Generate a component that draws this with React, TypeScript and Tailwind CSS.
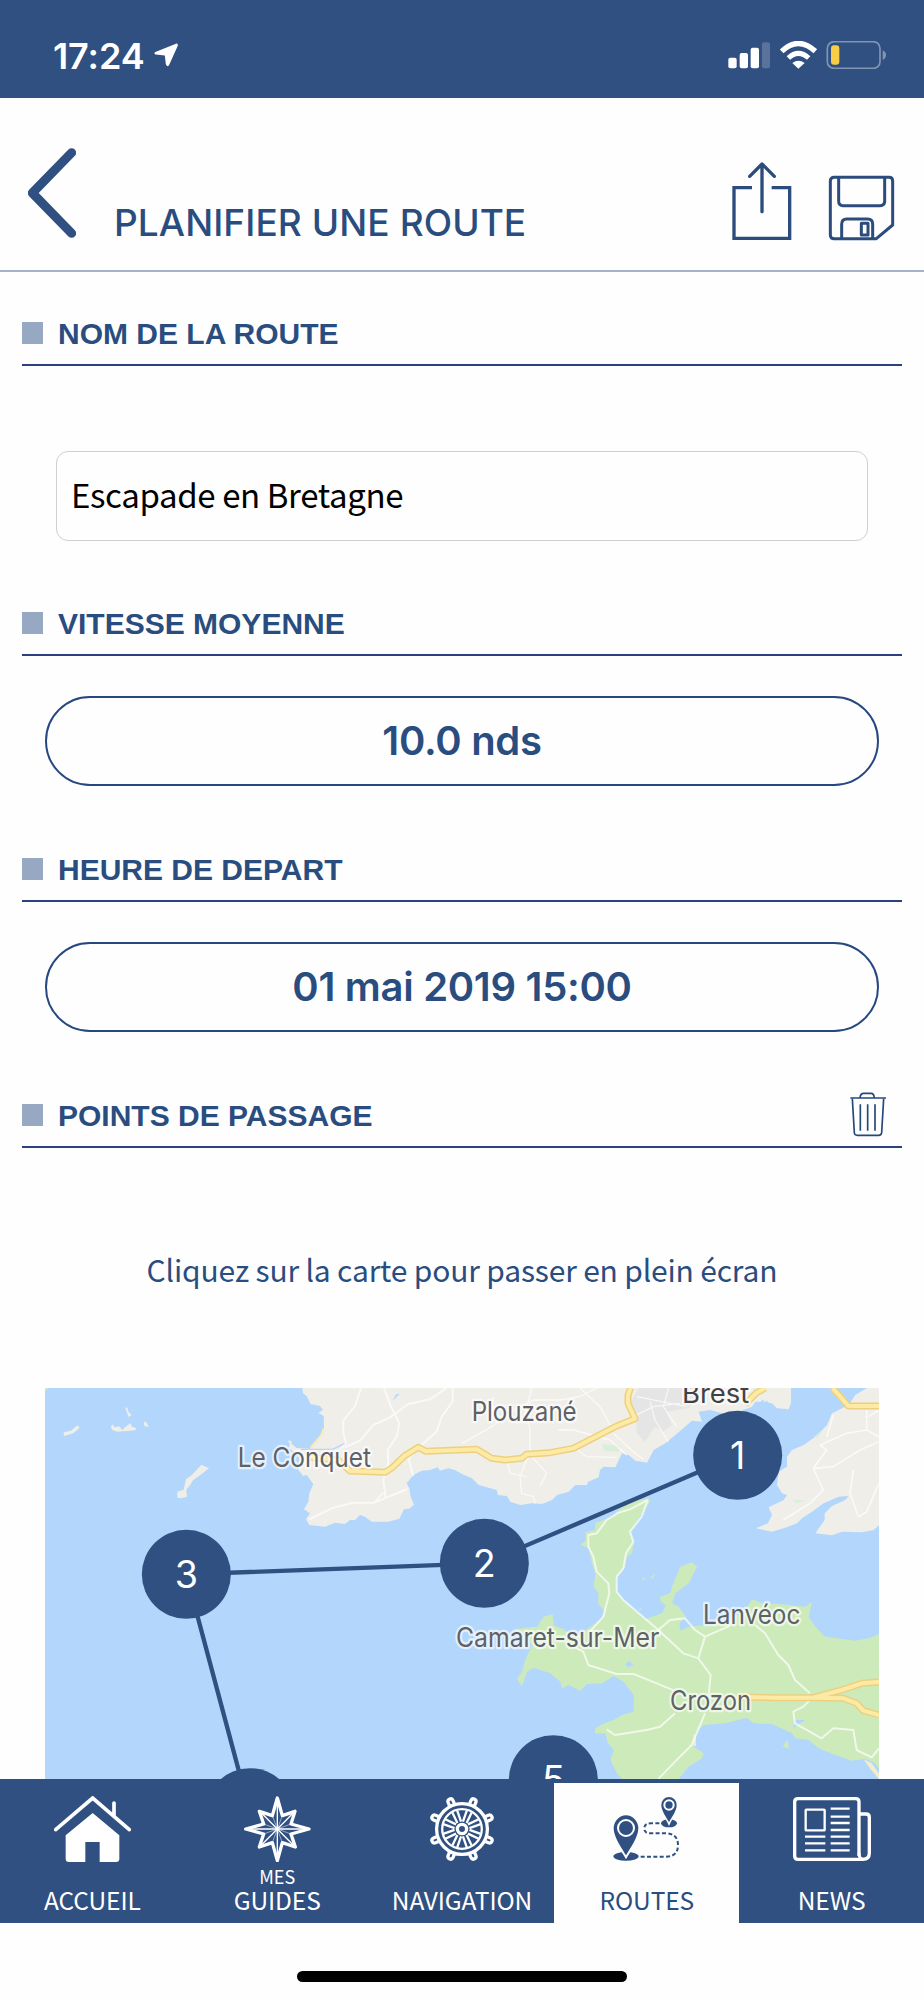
import type { ReactNode } from "react";

const NAVY = "#2f5080";

// --- Icons ---

function StatusIcons() {
  return (
    <svg className="h-7 w-[159px]" viewBox="798 124 477 84" fill="none">
      <rect x="799" y="174" width="25" height="32" rx="6" fill="#fff" />
      <rect x="833" y="160" width="25" height="46" rx="6" fill="#fff" />
      <rect x="866" y="144" width="25" height="62" rx="6" fill="#fff" />
      <rect x="900" y="128" width="24" height="78" rx="6" fill="#59739b" />
      <path d="M959 155 Q1009 108 1060 155" stroke="#fff" strokeWidth="16" />
      <path d="M979 175 Q1009 147 1040 175" stroke="#fff" strokeWidth="15" />
      <path d="M991 190 Q1009 176 1028 190 L1009 207Z" fill="#fff" />
      <rect x="1096" y="126" width="158" height="80" rx="20" stroke="#8295b2" strokeWidth="5" />
      <path d="M1262 152 Q1272 157 1272 166 Q1272 176 1262 181Z" fill="#8295b2" />
      <rect x="1107" y="137" width="25" height="58" rx="9" fill="#f8ce46" />
    </svg>
  );
}

function ShareIcon() {
  return (
    <svg className="h-[79px] w-[60px]" viewBox="809 485 180 237" fill="none" stroke="#2b4c7c" strokeWidth="10">
      <path d="M869 562H815V714H982V562H928" />
      <path d="M899 634V492M862 528L899 491L936 528" strokeLinecap="round" strokeLinejoin="round" />
    </svg>
  );
}

function SaveIcon() {
  return (
    <svg className="h-[66px] w-[67px]" viewBox="1097 524 201 198" fill="none" stroke="#2b4c7c" strokeWidth="9" strokeLinejoin="round">
      <path d="M1116 531H1280Q1291 531 1291 542V674L1242 715H1116Q1104 715 1104 703V543Q1104 531 1116 531Z" />
      <path d="M1129 531V603Q1129 616 1142 616H1253Q1267 616 1267 603V531" />
      <path d="M1138 715V672Q1138 656 1153 656H1216Q1231 656 1231 671V715M1197 669H1217V704H1197Z" />
    </svg>
  );
}

function TrashIcon() {
  return (
    <svg className="h-[45px] w-9" viewBox="1164 96 108 135" fill="none" stroke="#24477c" strokeWidth="5">
      <path d="M1165 114H1272" />
      <path d="M1194 114Q1195 100 1205 100H1227Q1236 100 1237 114" />
      <path d="M1171 116L1177 219Q1178 226 1186 226H1250Q1258 226 1259 218L1265 116" />
      <path d="M1195 133V212M1217 133V212M1239 133V212" />
    </svg>
  );
}

function HomeIcon() {
  return (
    <svg className="h-[66px] w-[77px]" viewBox="161 80 231 198" fill="none">
      <path d="M166 181L277 86L387 181M341 138V101" stroke="#fff" strokeWidth="11" strokeLinecap="round" />
      <path d="M277 131L357 198V268Q357 278 347 278H298V218H255V278H206Q196 278 196 268V198Z" fill="#fff" />
    </svg>
  );
}

function CompassIcon() {
  return (
    <svg className="h-[66px] w-[67px]" viewBox="732 79 201 198" fill="none" stroke="#fff" strokeLinejoin="round">
      <path
        d="M832 85L847 138L885 125L873 163L927 178L873 193L886 232L847 219L832 273L817 219L778 232L791 193L737 178L791 163L778 125L817 138Z"
        strokeWidth="10"
      />
      <path d="M832 90V270M740 178H925" strokeWidth="4" />
      <path d="M785 131L879 225M879 131L785 225" strokeWidth="4" />
      <path d="M817 138L847 219M847 138L817 219M791 163L873 193M873 163L791 193" strokeWidth="3" opacity=".5" />
    </svg>
  );
}

const HANDLES = [22.5, 67.5, 112.5, 157.5, 202.5, 247.5, 292.5, 337.5];

function WheelIcon() {
  return (
    <svg className="h-[66px] w-[66px]" viewBox="-100 -99 200 198" fill="none" stroke="#fff">
      <circle r="77" strokeWidth="10" />
      <circle r="60" strokeWidth="7" />
      <circle r="14" strokeWidth="10" />
      {HANDLES.map((a) => (
        <g key={a} transform={`rotate(${a})`}>
          <path d="M-6 -22L-8 -58M6 -22L8 -58" strokeWidth="7" />
          <path d="M-8 -80V-90Q-8 -98 0 -98Q8 -98 8 -90V-80" strokeWidth="10" />
        </g>
      ))}
    </svg>
  );
}

function RouteIcon() {
  return (
    <svg className="h-[66px] w-[67px]" viewBox="454 80 201 198" fill={NAVY}>
      <ellipse cx="493" cy="261" rx="38" ry="13" />
      <ellipse cx="622" cy="162" rx="24" ry="12" />
      <path
        d="M493 258C485 244 456 205 456 177A37 39 0 0 1 530 177C530 205 501 244 493 258Z"
        stroke="#fff"
        strokeWidth="12"
        paintOrder="stroke"
      />
      <path
        d="M622 159C616 146 599 126 599 107A23 24 0 0 1 645 107C645 126 628 146 622 159Z"
        stroke="#fff"
        strokeWidth="9"
        paintOrder="stroke"
      />
      <circle cx="493" cy="176" r="24" stroke="#fff" strokeWidth="6" />
      <circle cx="622" cy="107" r="14" stroke="#fff" strokeWidth="6" />
      <path
        d="M537 262H612Q649 262 649 227Q649 192 610 192H565Q548 192 548 177Q548 162 568 162H598"
        fill="none"
        stroke={NAVY}
        strokeWidth="6"
        strokeDasharray="12 7"
      />
    </svg>
  );
}

function NewsIcon() {
  return (
    <svg className="h-[66px] w-[78px]" viewBox="993 80 234 198" fill="none" stroke="#fff">
      <path d="M1191 260V98Q1191 88 1181 88H1008Q998 88 998 98V260Q998 270 1008 270H1203Q1222 270 1222 251V144Q1222 134 1212 134H1191" strokeWidth="10" />
      <path d="M1191 250Q1191 270 1204 270" strokeWidth="9" />
      <rect x="1031" y="121" width="57" height="62" strokeWidth="7" rx="2" />
      <path
        d="M1106 118H1163M1106 142H1163M1106 161H1163M1106 182H1163M1106 202H1163M1106 222H1163M1106 243H1163M1029 202H1090M1029 222H1090M1029 243H1090"
        strokeWidth="7"
      />
    </svg>
  );
}

// --- Map ---

const places = [
  { name: "Le Conquet", x: 713, y: 292, w: 400 },
  { name: "Plouzané", x: 1415, y: 154, w: 315 },
  { name: "Camaret-sur-Mer", x: 1368, y: 832, w: 610 },
  { name: "Lanvéoc", x: 2109, y: 761, w: 292 },
  { name: "Crozon", x: 2010, y: 1021, w: 243 },
];

const waypoints = [
  { n: 1, x: 2213, y: 256 },
  { n: 2, x: 1453, y: 580 },
  { n: 3, x: 559, y: 613 },
  { n: 4, x: 750, y: 1328 },
  { n: 5, x: 1660, y: 1229 },
];

function RouteMap() {
  return (
    <svg className="block h-[391px] w-[834px]" viewBox="135 54 2502 1173">
      <rect x="135" y="54" width="2502" height="1173" fill="#b3d7fc" />
      <path d="M135 54H145L135 64Z" fill="#dce9b8" />

      {/* islands */}
      <g fill="#efeee9">
        <path d="M191 187L213 182L232 166L239 173L220 190L192 198Z" />
        <path d="M332 172L338 163L344 172L358 169L367 181L375 172L391 160L396 170L408 174L406 181L352 185L338 180Z" />
        <path d="M375 112L382 114L386 127L395 135L386 141Z" />
        <path d="M432 155L439 157L446 171L433 168Z" />
        <path d="M604 284L627 295L600 316L579 331L571 344L559 360L561 380L543 385L532 383V365L551 359L558 327L575 316Z" />
      </g>

      {/* mainland */}
      <path
        fill="#efeee9"
        d="M907 54L909 70L920 78L932 102L960 108L969 120L955 128L971 138L972 176L950 212L930 236L890 234L875 222L874 212L862 212L870 222L867 235L900 258L895 300L910 318L920 315L940 342L928 370L925 395L912 418L930 430L918 448L928 465L975 470L1005 458L1035 462L1050 450L1065 450L1080 435L1095 440L1115 455L1165 455L1198 446L1212 418L1228 416L1242 404L1232 380L1228 355L1220 340L1240 315L1265 302L1290 300L1313 292L1320 302L1345 295L1365 300L1386 312L1416 325L1436 345L1471 355L1490 360L1494 375L1521 378L1531 395L1561 405L1596 400L1626 402L1656 390L1671 375L1706 365L1726 345L1761 345L1764 335L1796 322L1800 300L1811 290L1846 292L1866 250L1886 255L1906 272L1941 278L1961 240L1996 220L2026 195L2076 152L2106 155L2096 125L2130 120L2190 135L2256 110L2266 95L2291 95L2316 100L2331 115L2366 118L2373 100V54Z"
      />
      <path
        fill="#efeee9"
        d="M2601 54L2566 75L2546 105L2496 130L2481 165L2446 200L2411 225L2376 240L2361 260V290L2336 305L2331 345L2346 370L2361 375L2351 390L2306 412L2316 435L2304 460L2268 475L2316 485L2351 475L2391 460L2406 445L2436 425L2471 400L2516 380L2546 378L2536 390L2496 408L2474 430V450L2446 490L2496 496L2526 485L2586 487L2621 480L2637 466V54Z"
      />
      <path fill="#e5e5e5" d="M1916 54L1890 100L1908 140L1910 190L1935 215L1965 170L1990 185L2015 165L2000 125L2065 115L2100 80L2110 54Z" />
      <path fill="#dbeeda" d="M1807 222L1860 228L1857 245L1812 243ZM2376 388L2416 391L2390 400ZM2443 200L2472 178L2450 205Z" />
      <path d="M971 175L965 195L932 233" fill="none" stroke="#f8ecb5" strokeWidth="6" />
      <path d="M903 238H998L1035 220" fill="none" stroke="#b3d7fc" strokeWidth="4" />
      <path d="M1178 92L1188 73L1199 71Z" fill="#b3d7fc" />
      <path d="M2276 110L2290 90M2286 118L2302 93" stroke="#b3d7fc" strokeWidth="5" />

      {/* presqu'île de Crozon */}
      <path
        fill="#cdeabb"
        d="M1946 385L1906 392L1866 412L1836 440L1786 460L1784 480L1756 487L1758 510L1741 525L1766 535L1776 580L1786 610L1781 650L1796 670L1794 700L1811 720L1806 745L1771 770L1726 800L1695 782L1661 765L1658 733L1631 740L1611 770L1536 778L1586 795L1594 830L1576 870L1566 905L1551 928L1566 948L1581 905L1601 893L1651 910L1681 935L1686 955L1706 945L1741 962L1761 942L1806 940L1841 918L1871 935L1901 975V1025L1866 1035L1841 1050L1816 1058L1786 1075L1784 1090L1816 1090L1824 1120L1841 1140L1831 1170L1851 1210L1866 1227H2036L2066 1190L2106 1165L2111 1150L2081 1130L2086 1090L2111 1065L2176 1060L2241 1043L2261 1060L2316 1062L2376 1090L2386 1105L2426 1110L2456 1135L2506 1155L2556 1172L2596 1166L2625 1180L2637 1195V793L2606 805L2566 812L2476 800L2446 770L2426 740L2436 695L2416 710L2346 703L2286 700L2256 688L2236 720L2176 760L2126 765L2066 770L2041 782L2038 760L2058 740L2036 710L2016 700L2026 670L2066 640L2091 590L2076 577L2041 590L2016 650L2011 670L1981 680V695L1998 705L1986 730L1936 748L1900 718L1851 670L1848 625L1876 590L1880 560L1896 550L1901 520L1891 485L1926 430L1950 395Z"
      />
      <path fill="#cdeabb" d="M1926 634L1936 625L1930 622ZM1950 624L1965 610L1960 625ZM1914 720L1928 710L1920 722ZM2348 1130L2362 1110L2368 1136ZM1675 773L1698 778L1680 780Z" />
      <path fill="#b3d7fc" d="M1875 882L1888 872L1900 886L1882 892ZM2385 1050L2417 1049L2400 1060L2380 1075Z" />
      <path fill="#f6edc8" d="M2591 1168L2615 1180L2637 1210V1227L2610 1195Z" />
      <path d="M2084 1095V1128" stroke="#f6edc8" strokeWidth="7" />

      {/* minor roads */}
      <g fill="none" stroke="#fff" strokeWidth="6" strokeLinejoin="round" opacity=".7">
        <path d="M1083 54L1065 108L1030 152V190L1038 220L1010 250" />
        <path d="M1340 54L1290 88L1225 102L1170 142L1120 165L1080 212L1035 232" />
        <path d="M1152 54L1172 108L1198 160L1190 200L1163 240L1165 280L1150 330L1157 385" />
        <path d="M1358 54V95L1325 140L1310 185L1270 220L1225 265L1240 318" />
        <path d="M928 448L1000 413L1060 398L1123 398L1150 368M1123 398L1222 357" />
        <path d="M1386 220L1475 170L1540 120L1600 90L1680 90L1740 80L1790 54" strokeWidth="4" />
        <path d="M1596 54L1575 130L1590 175V245L1560 320L1565 370L1600 380L1605 400" strokeWidth="4" />
        <path d="M1480 80L1475 160M1520 265L1530 310L1580 320M1596 260L1640 310L1620 350M1675 180L1720 180L1830 210L1880 255M1720 230L1760 260L1850 262M1740 54L1800 110L1830 165" strokeWidth="4" />
        <path d="M1840 190L1900 245L1930 268M1900 140L1960 110L2040 100M1950 95L1965 150L2005 215M2006 54L1990 110L2030 170M1910 80L2060 110" strokeWidth="4" />
        <path d="M2637 215L2580 240L2500 290L2440 295L2470 360L2430 400L2350 450M2440 295L2480 240L2460 225L2540 190L2600 180M2560 300L2550 370L2575 440L2600 425L2637 340M2600 120V180L2637 200M2605 140L2637 120M2500 135L2480 200" strokeWidth="5" />
        <path d="M1943 390L1890 418L1855 428L1820 450L1790 490L1765 495V530L1780 560L1790 605L1825 640L1828 670L1810 740L1770 785" />
        <path d="M1943 390L1925 440L1890 485L1900 515L1878 550L1870 595L1850 620V665L1870 690L1975 780L2050 850L2095 865L2132 915L2126 975" />
        <path d="M1975 780L2010 750L2055 745L2085 780L2115 800L2095 865M2115 800L2190 767M1700 820L1750 845L1765 885L1850 912H1900L1965 938L2030 965M2265 765L2295 790L2335 855L2365 885L2385 930L2430 970" />
        <path d="M2430 990L2410 1010L2380 1025L2385 1060L2465 1105L2500 1075L2560 1080L2570 1140L2615 1162L2637 1135M1820 1078L1845 1095L1940 1080L1980 1070L2025 1030M2115 1030L2075 1125L2025 1175L1975 1227" />
      </g>

      {/* main roads */}
      {["#edd07f", "#fdeba5"].map((color, i) => (
        <g key={color} fill="none" stroke={color} strokeWidth={i === 0 ? 21 : 12} strokeLinejoin="round">
          <path d="M930 262L1015 270L1050 303L1155 307L1178 292L1213 258L1255 232L1278 244L1430 238L1475 265L1515 270L1565 265L1580 253L1650 248L1720 235L1850 168L1905 146L1884 100V75L1892 54" />
          <path d="M2235 103L2270 68L2296 54M2498 54L2545 108H2637" />
          <path d="M2210 980L2320 983H2440L2525 960L2585 940L2637 936M2440 983L2530 985L2570 1000L2590 1022L2637 1035" />
        </g>
      ))}

      {/* labels */}
      <g fontFamily="Inter, sans-serif" fontSize="79" fill="#5e6166" stroke="#fff" strokeWidth="14" strokeOpacity=".65" strokeLinejoin="round" paintOrder="stroke">
        {places.map((p) => (
          <text key={p.name} x={p.x} y={p.y} textLength={p.w} lengthAdjust="spacingAndGlyphs">
            {p.name}
          </text>
        ))}
        <text x="2046" y="99" textLength="202" lengthAdjust="spacingAndGlyphs" fill="#3f4144">
          Brest
        </text>
      </g>

      {/* route */}
      <path d="M2213 256L1453 580L559 613L750 1328" fill="none" stroke={NAVY} strokeWidth="13" />
      {waypoints.map((w) => (
        <g key={w.n}>
          <circle cx={w.x} cy={w.y} r="133.5" fill={NAVY} />
          <text x={w.x} y={w.y + 41} textAnchor="middle" fontFamily="Inter, sans-serif" fontSize="113" fill="#fff">
            {w.n}
          </text>
        </g>
      ))}
    </svg>
  );
}

// --- Layout pieces ---

function SectionTitle({ title, action }: { title: string; action?: ReactNode }) {
  return (
    <div className="mx-[22px] flex h-[46px] items-start border-b-2 border-[#2c4080]">
      <div className="mt-[2px] h-[22px] w-[21px] bg-[#97a8c2]" />
      <h2 className="-mt-px ml-[15px] font-['Liberation_Sans'] text-[30px] leading-[30px] font-bold whitespace-nowrap text-[#2a4d80]">
        {title}
      </h2>
      {action && <div className="-mt-[10px] mr-4 ml-auto">{action}</div>}
    </div>
  );
}

function PillButton({ children }: { children: ReactNode }) {
  return (
    <button className="mx-[45px] flex h-[90px] items-center justify-center rounded-full border-2 border-[#264780] font-['Inter'] text-[40px] font-semibold tracking-[-0.3px] text-[#2a4d80]">
      {children}
    </button>
  );
}

const tabs = [
  { label: "ACCUEIL", icon: <HomeIcon /> },
  { label: "GUIDES", small: "MES", icon: <CompassIcon /> },
  { label: "NAVIGATION", icon: <WheelIcon /> },
  { label: "ROUTES", icon: <RouteIcon />, active: true },
  { label: "NEWS", icon: <NewsIcon /> },
];

export default function App() {
  return (
    <div className="flex h-[2000px] w-[924px] flex-col overflow-hidden bg-[#fefefe]">
      {/* Status bar */}
      <div className="flex h-[98px] shrink-0 items-start bg-[#2f5080] pt-[41px] pr-[37px] pl-[53px] text-white">
        <span className="mt-[-3px] font-['Inter'] text-[36px] leading-[36px] font-semibold tracking-[-0.1px]">17:24</span>
        <svg className="mt-[2px] ml-[9px] h-6 w-6" viewBox="458 132 73 71" fill="#fff">
          <path d="M525 133L462 158Q456 163 463 166L491 169L494 196Q498 206 504 198L530 140Q532 132 525 133Z" />
        </svg>
        <div className="ml-auto">
          <StatusIcons />
        </div>
      </div>

      {/* Header */}
      <header className="flex h-[174px] shrink-0 items-start border-b-2 border-[#a6b2c8]">
        <svg className="mt-[50px] ml-7 h-[90px] w-12" viewBox="84 444 144 270" fill="none">
          <path d="M215 458L97 579L215 700" stroke="#2f5080" strokeWidth="27" strokeLinecap="round" strokeLinejoin="round" />
        </svg>
        <h1 className="mt-[103px] ml-[38px] font-['Inter'] text-[37px] leading-[44px] font-medium tracking-[0.08px] whitespace-nowrap text-[#2a4d80]">
          PLANIFIER UNE ROUTE
        </h1>
        <div className="mt-[64px] mr-[29px] ml-auto flex items-start">
          <ShareIcon />
          <div className="mt-[13px] ml-9">
            <SaveIcon />
          </div>
        </div>
      </header>

      {/* Form */}
      <main className="flex h-[1507px] shrink-0 flex-col pt-[48px]">
        <SectionTitle title="NOM DE LA ROUTE" />
        <input
          className="mx-14 mt-[85px] mb-[69px] h-[90px] rounded-xl border-[1.5px] border-[#cfcfd0] bg-[#fefefe] px-[14px] pb-[5px] font-['Noto_Sans_CJK_SC'] text-[33px] tracking-[-0.38px] text-black"
          defaultValue="Escapade en Bretagne"
        />

        <SectionTitle title="VITESSE MOYENNE" />
        <div className="mt-10 mb-[70px] flex flex-col">
          <PillButton>10.0 nds</PillButton>
        </div>

        <SectionTitle title="HEURE DE DEPART" />
        <div className="mt-10 mb-[70px] flex flex-col">
          <PillButton>01 mai 2019 15:00</PillButton>
        </div>

        <SectionTitle title="POINTS DE PASSAGE" action={<TrashIcon />} />
        <p className="mt-[97px] mb-[95px] text-center font-['Noto_Sans_CJK_SC'] text-[30px] leading-[48px] tracking-[-0.17px] text-[#2a4d80]">
          Cliquez sur la carte pour passer en plein écran
        </p>
        <div className="mx-[45px]">
          <RouteMap />
        </div>
      </main>

      {/* Tab bar */}
      <nav className="grid h-[144px] shrink-0 grid-cols-5 bg-[#2f5080] pt-1">
        {tabs.map((tab) => (
          <div
            key={tab.label}
            className={
              tab.active
                ? "flex flex-col items-center bg-[#fefefe] pt-[13px] text-[#2a4d80]"
                : "flex flex-col items-center pt-[13px] text-white"
            }
          >
            {tab.icon}
            <span className="mt-1 h-[22px] font-['Noto_Sans_CJK_SC'] text-[18px] leading-[21px]">{tab.small}</span>
            <span className="font-['Noto_Sans_CJK_SC'] text-[24.5px] leading-[24px] tracking-[-0.1px]">{tab.label}</span>
          </div>
        ))}
      </nav>

      <div className="mx-auto mt-12 h-[11px] w-[330px] shrink-0 rounded-full bg-black" />
    </div>
  );
}
